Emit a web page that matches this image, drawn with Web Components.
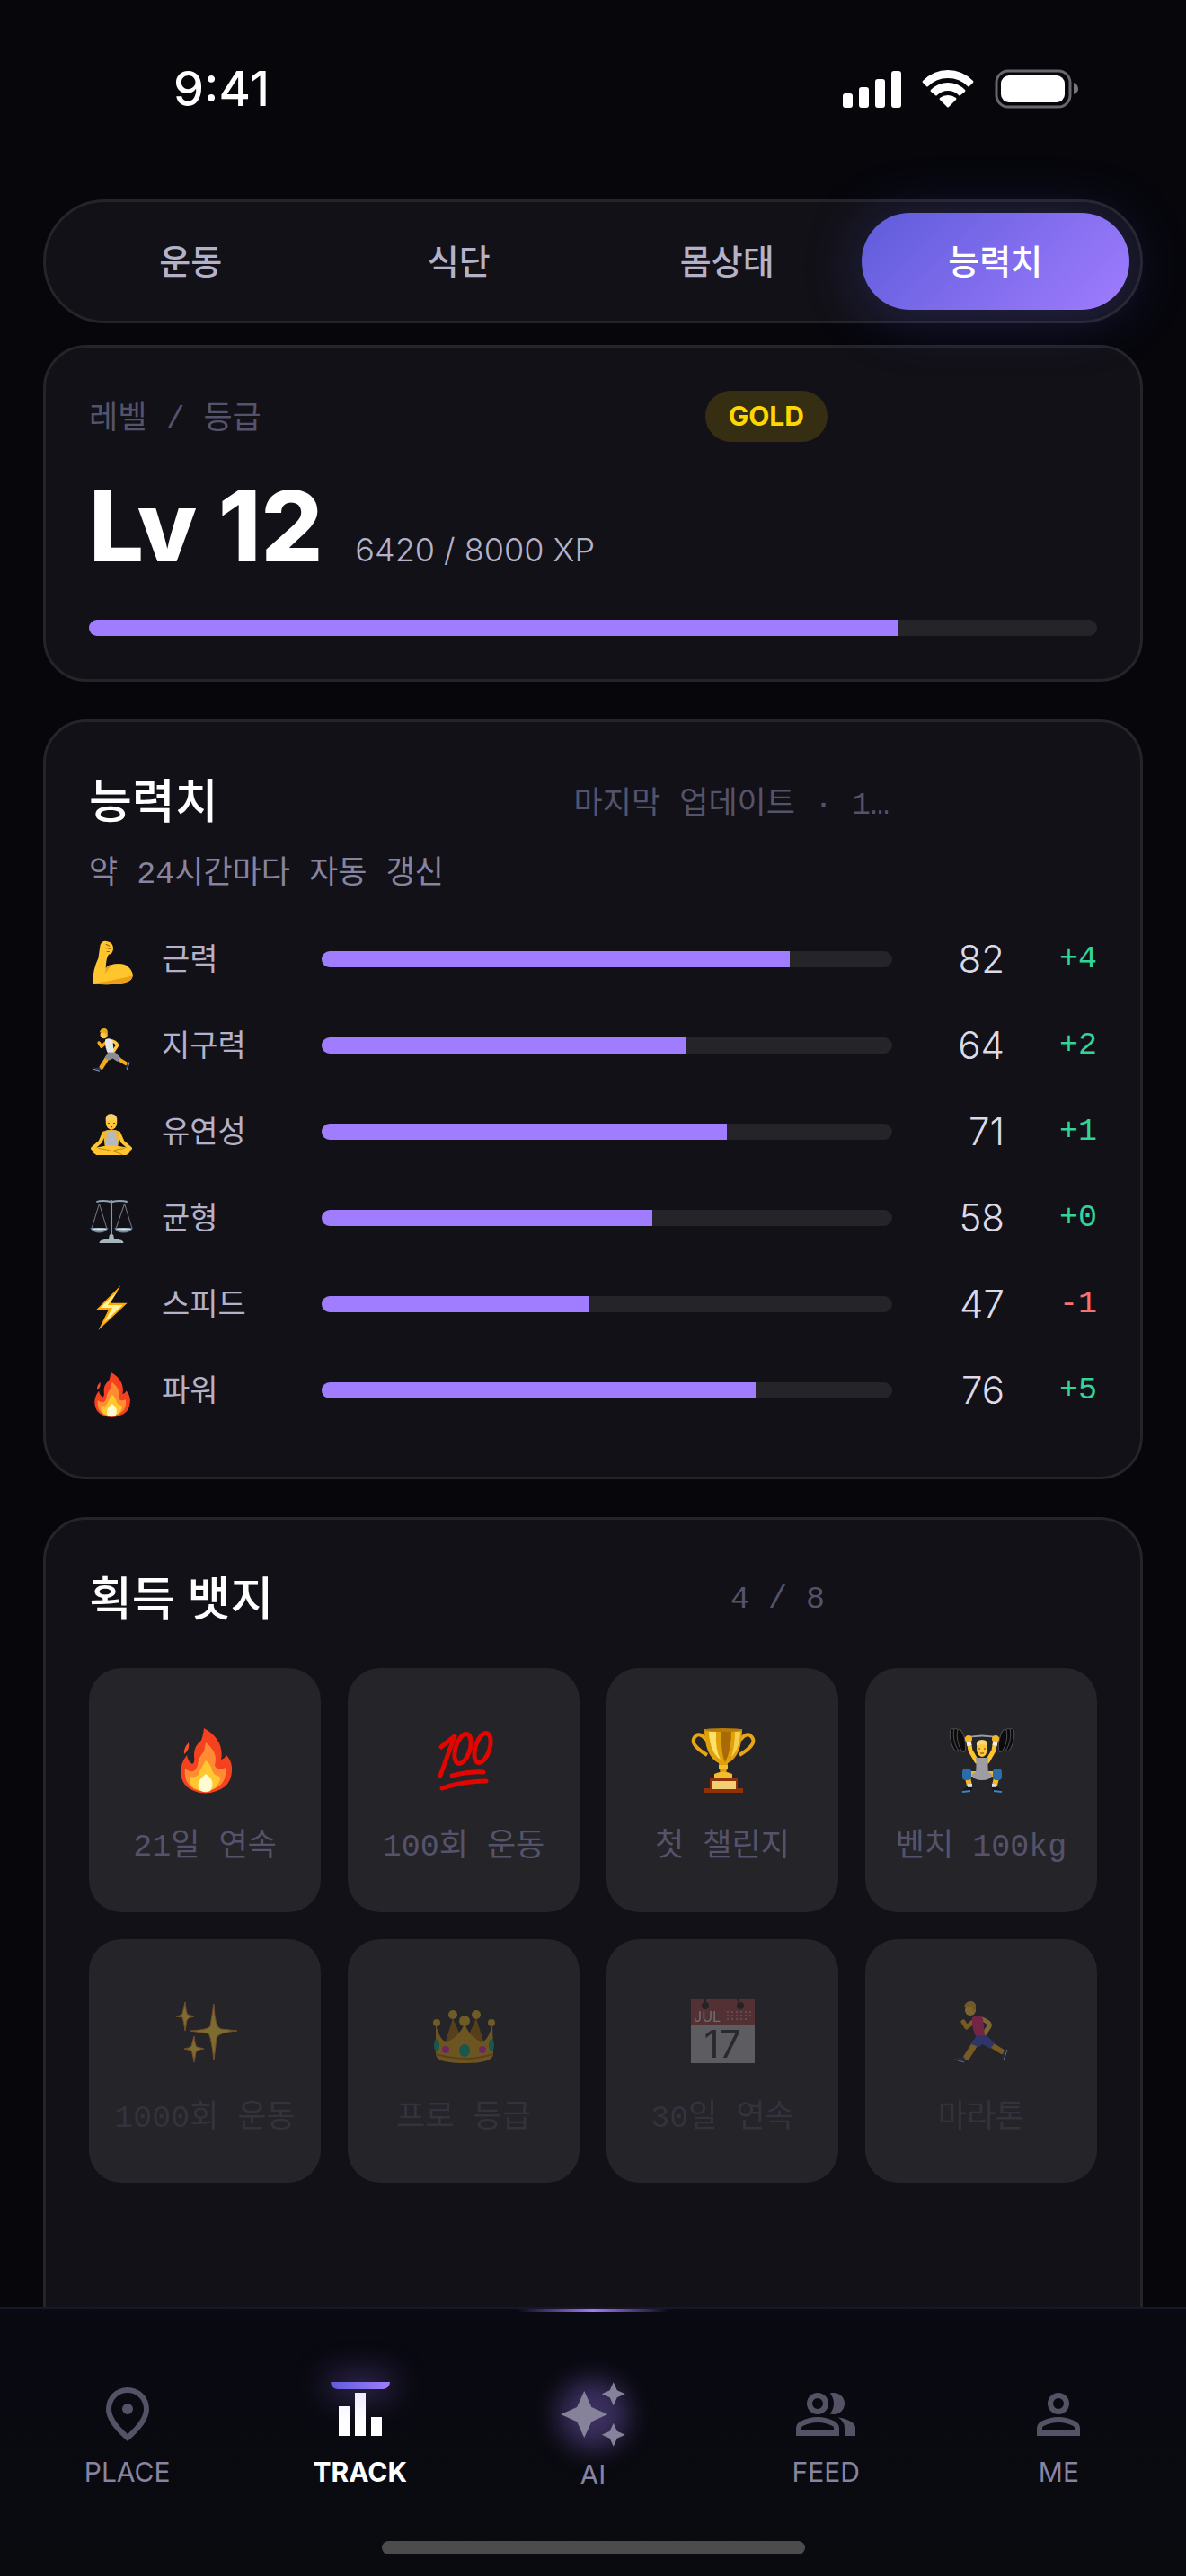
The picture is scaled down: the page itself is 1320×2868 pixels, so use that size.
<!DOCTYPE html>
<html lang="ko">
<head>
<meta charset="utf-8">
<meta name="viewport" content="width=device-width, initial-scale=1">
<title>Track</title>
<style>
  :root {
    --bg: #06060b;
    --surface: #121117;
    --line: #252429;
    --accent: #a07cff;
    --accent-2: #5e5cda;
    --text: #ffffff;
    --text-2: #b4b1c8;
    --text-3: #8784a0;
    --text-4: #55536b;
    --mono: "Liberation Mono", "Noto Sans CJK KR", monospace;
  }
  html, body {
    margin: 0;
    height: 100%;
    background: var(--bg);
    color: var(--text);
    font-family: Inter, "Noto Sans CJK KR", sans-serif;
  }
</style>
</head>
<body>
<track-app></track-app>

<script>
const runner = (shirt, shorts) => `
  <g fill="none" stroke-linecap="round" stroke-linejoin="round" stroke="#f2ab1c">
    <path d="M46 51 59 59" stroke-width="6"/>
    <path d="M30 49Q26 56 20 65" stroke-width="7"/>
    <path d="M29 24 20 32 16 26" stroke-width="5"/>
    <path d="M37 23Q47 27 45 31L39 40" stroke-width="5" stroke="#ffc83d"/>
  </g>
  <path d="M26 21Q33 17 38 22L40 42 31 44Q25 33 26 21Z" fill="${shirt}"/>
  <path d="M31 41 42 41 51 50 46 56 38 51 33 54 25 51Z" fill="${shorts}"/>
  <circle cx="24" cy="13" r="6" fill="#ffc83d"/>
  <path d="M17 9Q19 2 26 3 32 5 29 13L27 14 26 10Z" fill="#e9a820"/>
  <path d="M7 66 18 66 17 71ZM61 59 65 55 63 66 59 68Z" fill="#23396b"/>
  <path d="M7 68 17 71M65 57 61 69" stroke="#cdd6ea" stroke-width="1"/>`;

const flame = `
  <path d="M35 1C50 9 57 22 54 36Q58 35 60 31 67 39 66 49 65 66 49 71 36 76 24 71 10 66 9 50 9 40 16 31 17 38 22 41 25 40 24 32C24 22 27 21 29 17Q33 17 35 1Z" fill="#f4411f"/>
  <path d="M18 17Q19 23 16 27L13 30Q12 23 18 17Z" fill="#f4512c"/>
  <path d="M37 17C49 27 49 34 47 43Q51 49 59 45 61 63 46 69 35 74 24 69 12 62 14 46 25 54 28 42 29 33 35 27Z" fill="#ff8b32"/>
  <path d="M37 37C46 43 42 52 50 54Q57 56 48 67 38 75 24 68 17 62 20 55 29 57 30 49Z" fill="#ffc82e"/>
  <path d="M37 52Q49 60 42 71 36 74 30 70 25 61 37 52Z" fill="#fffbd0"/>`;

// each drawing is [viewBox size, markup]
const emojis = {
  muscle: [48, `
    <path d="M12 5Q14 0 19 1 26 2 26 9 25 15 21 15 18 20 18 30 22 25 32 25 44 25 47 37 47 43 39 45 21 49 4 46 4 31 10 19Z" fill="#ffc52e"/>
    <path d="M18 30Q20 26 25 26 20 31 17 36ZM4 46Q22 44 46 38 47 43 39 45 21 49 4 46Z" fill="#eba018"/>
    <path d="M18 4 22 6M17 8 23 9M19 12 22 12" stroke="#9c5d0c" stroke-width="1" fill="none"/>`],
  run: [72, runner("#e6e6ea", "#8b8c94")],
  marathon: [72, runner("#e8286f", "#3c50c8")],
  yoga: [48, `
    <path d="M16 22 12 31 4 38M32 22 36 31 44 38" fill="none" stroke="#ffc52e" stroke-width="4" stroke-linecap="round"/>
    <path d="M15 20Q24 16 33 20L31 36H17Z" fill="#f5b524"/>
    <path d="M19 18V24L17 38H31L29 24V18Q24 23 19 18Z" fill="#b9b9bd"/>
    <path d="M8 37Q24 33 40 37 48 41 40 45 24 45 8 45 0 41 8 37Z" fill="#ffc52e"/>
    <path d="M10 38Q26 40 36 45M38 38Q30 39 25 41" fill="none" stroke="#c98311" stroke-width="1"/>
    <ellipse cx="24" cy="10" rx="6" ry="8" fill="#ffc83d"/>
    <path d="M18 9Q17 1 24 1 31 2 30 9 24 6 18 9Z" fill="#f7d06a"/>
    <path d="M20 11H22M26 11H28M23 15H25" stroke="#7a4a0c"/>`],
  scales: [48, `
    <path d="M8 3Q14 1 24 3 34 1 41 3" fill="none" stroke="#8ea2b0" stroke-width="2"/>
    <path d="M24 1V44" stroke="#7e98aa" stroke-width="2"/>
    <path d="M11 5 3 31M11 5 19 31M38 5 29 31M38 5 46 31" stroke="#71767c" stroke-width="1" fill="none"/>
    <path d="M1 31H21Q17 36 11 36 5 36 1 31ZM27 31H47Q44 36 37 36 30 36 27 31Z" fill="#6f8799"/>
    <ellipse cx="11" cy="32" rx="8" ry="1" fill="#d3dfe6"/><ellipse cx="37" cy="32" rx="8" ry="1" fill="#d3dfe6"/>
    <path d="M22 38H26L27 43Q37 43 37 47H11Q11 43 21 43Z" fill="#a8b5be"/>`],
  bolt: [48, `
    <path d="M34 0 23 19 41 19 10 48 21 26 8 26Z" fill="#ffa800"/>
    <path d="M31 6 20 21 36 21 16 40 25 24 12 24Z" fill="#fff3a6"/>`],
  flame: [72, flame],
  hundred: [72, `
    <g fill="none" stroke="#e10600" stroke-width="5" stroke-linecap="round">
      <line x1="11" y1="22" x2="26" y2="10"/><line x1="26" y1="10" x2="10" y2="54"/>
      <ellipse cx="35" cy="24" rx="8" ry="17" transform="rotate(17 35 24)"/>
      <ellipse cx="57" cy="23" rx="8" ry="17" transform="rotate(17 57 23)"/>
      <path d="M23 54Q40 49 58 50M12 68Q36 60 61 60"/>
    </g>`],
  trophy: [72, `
    <path d="M18 14Q9 3 4 13 1 20 19 31M56 14Q65 3 70 13 73 20 55 31" fill="none" stroke="#e8a712" stroke-width="4"/>
    <path d="M16 2H58Q58 32 42 40L40 53H34L32 40Q16 32 16 2Z" fill="#e0a00c"/>
    <path d="M21 5H29Q28 26 34 36 22 28 21 5Z" fill="#ffe06a"/>
    <path d="M35 3H46Q46 26 39 39 34 28 35 3Z" fill="#a76a04"/>
    <path d="M50 5H56Q55 25 46 33 50 20 50 5Z" fill="#f8cf4c"/>
    <ellipse cx="37" cy="3" rx="21" ry="2" fill="#b87c08"/>
    <path d="M32 42H42V47H32ZM27 52Q37 47 47 52V57H27Z" fill="#f3bd2c"/>
    <path d="M22 56H53V68H59V73H15V68H22Z" fill="#8f3209"/>
    <rect x="24" y="60" width="27" height="9" fill="#f1cf72"/>`],
  lifter: [72, `
    <path d="M15 13Q37 6 59 13" fill="none" stroke="#9aa0a8" stroke-width="2"/>
    <g fill="#0b0b0c" stroke="#4d4e52" stroke-width="1">
      <ellipse cx="6" cy="14" rx="4" ry="13" transform="rotate(-12 6 14)"/>
      <ellipse cx="10" cy="14" rx="4" ry="13" transform="rotate(-12 10 14)"/>
      <ellipse cx="14" cy="15" rx="4" ry="13" transform="rotate(-12 14 15)"/>
      <ellipse cx="68" cy="14" rx="4" ry="13" transform="rotate(12 68 14)"/>
      <ellipse cx="64" cy="14" rx="4" ry="13" transform="rotate(12 64 14)"/>
      <ellipse cx="60" cy="15" rx="4" ry="13" transform="rotate(12 60 15)"/>
    </g>
    <path d="M22 14 24 26 31 38M52 14 50 26 43 38" fill="none" stroke="#ffc52e" stroke-width="5" stroke-linecap="round"/>
    <circle cx="22" cy="13" r="4" fill="#f5b524"/><circle cx="52" cy="13" r="4" fill="#f5b524"/>
    <path d="M20 19 25 18M49 18 54 19" stroke="#eeeef0" stroke-width="4"/>
    <path d="M30 52 20 52 23 65M44 52 54 52 51 65" fill="none" stroke="#f5b524" stroke-width="6"/>
    <path d="M30 34H44Q43 44 44 50L49 53Q46 59 37 59 28 59 25 53L30 50Q31 44 30 34Z" fill="#9d9da3"/>
    <rect x="15" y="46" width="10" height="13" rx="4" fill="#2a6dac"/><rect x="49" y="46" width="10" height="13" rx="4" fill="#2a6dac"/>
    <path d="M21 63H26V67H21ZM48 63H53V67H48Z" fill="#dcdce0"/>
    <path d="M15 71Q17 66 27 67L24 72ZM59 71Q57 66 47 67L50 72Z" fill="#15171b"/>
    <path d="M15 72 24 71M59 72 50 71" stroke="#3b86c4" stroke-width="2"/>
    <ellipse cx="37" cy="24" rx="6" ry="9" fill="#ffc83d"/>
    <path d="M31 21Q30 14 37 14 44 14 43 21 37 17 31 21Z" fill="#f7d67c"/>
    <path d="M33 24H35M39 24H41M35 29H39" stroke="#6b3f10"/>`],
  sparkles: [72, `
    <g fill="#ffd83a" stroke="#e78b2a" stroke-width="1">
      <path d="M46 6Q47 33 54 34L72 36Q50 38 49 44L46 69Q43 42 40 39L19 36Q40 35 42 31Z"/>
      <path d="M14 4Q15 16 17 18L24 20Q17 21 16 24L14 36Q12 23 11 21L4 20Q10 19 11 17Z"/>
      <path d="M24 42Q25 52 27 54L35 56Q27 57 26 60L24 71Q22 60 21 58L13 56Q20 55 21 53Z"/>
    </g>`],
  crown: [72, `
    <path d="M14 54 24 22 37 52 50 22 60 54Z" fill="#a06a09"/>
    <path d="M5 29Q11 52 20 47 31 42 37 28 42 42 53 47 62 52 68 29L69 62Q69 72 37 72 5 72 5 62Z" fill="#d99f18"/>
    <path d="M5 62Q37 72 69 62" fill="none" stroke="#a87008" stroke-width="2"/>
    <g fill="#dfae24"><circle cx="6" cy="27" r="4"/><circle cx="24" cy="18" r="5"/><circle cx="37" cy="25" r="6"/><circle cx="50" cy="18" r="5"/><circle cx="67" cy="27" r="4"/></g>
    <g fill="#07a37c"><ellipse cx="6" cy="52" rx="3" ry="7"/><ellipse cx="37" cy="58" rx="6" ry="7"/><ellipse cx="67" cy="52" rx="3" ry="7"/></g>
    <ellipse cx="16" cy="57" rx="4" ry="4" fill="#d62bb4"/><ellipse cx="57" cy="57" rx="4" ry="4" fill="#d62bb4"/>`],
  calendar: [72, `
    <rect x="1" y="1" width="71" height="71" fill="#b2b1b6"/>
    <rect x="1" y="1" width="71" height="28" fill="#984446"/>
    <path d="M17 0V6M52 0 56 6" stroke="#222" stroke-width="2"/>
    <circle cx="17" cy="8" r="4" fill="#222"/><circle cx="56" cy="8" r="4" fill="#222"/>
    <path d="M41 15H70M41 19H70M41 23H66" stroke="#c98587" stroke-width="2" stroke-dasharray="2 3"/>
    <text x="4" y="26" font-size="16" font-family="Inter, sans-serif" fill="#ddd">JUL</text>
    <text x="36" y="66" font-size="42" text-anchor="middle" font-family="Inter, sans-serif" fill="#333">17</text>`],
};

const navIcons = {
  place: `<svg viewBox="0 -960 960 960"><path d="M480-480q33 0 56.500-23.500T560-560q0-33-23.500-56.500T480-640q-33 0-56.500 23.500T400-560q0 33 23.500 56.500T480-480Zm0 294q122-112 181-203.500T720-552q0-109-69.500-178.500T480-800q-101 0-170.500 69.500T240-552q0 71 59 162.500T480-186Zm0 106Q319-217 239.500-334.500T160-552q0-150 96.500-239T480-880q127 0 223.500 89T800-552q0 100-79.500 217.500T480-80Z"/></svg>`,
  track: `<svg viewBox="0 0 24 24"><path d="M4 9h4v11H4zM10 4h4v16h-4zM16 13h4v7h-4z"/></svg>`,
  ai: `<svg viewBox="0 0 24 24"><path d="M19 9l1.250-2.750L23 5l-2.750-1.250L19 1l-1.250 2.750L15 5l2.750 1.250L19 9zm-7.500.5L9 4 6.500 9.500 1 12l5.500 2.500L9 20l2.500-5.500L17 12l-5.500-2.500zM19 15l-1.250 2.750L15 19l2.750 1.250L19 23l1.250-2.750L23 19l-2.750-1.250L19 15z"/></svg>`,
  feed: `<svg viewBox="0 -960 960 960"><path d="M40-160v-112q0-34 17.500-62.500T104-378q62-31 126-46.500T360-440q66 0 130 15.500T616-378q29 15 46.500 43.500T680-272v112H40Zm720 0v-120q0-44-24.500-84.500T666-434q51 6 96 20.500t84 35.500q36 20 55 44.500t19 53.500v120H760ZM360-480q-66 0-113-47t-47-113q0-66 47-113t113-47q66 0 113 47t47 113q0 66-47 113t-113 47Zm400-160q0 66-47 113t-113 47q-11 0-28-2.500t-28-5.500q27-32 41.500-71t14.500-81q0-42-14.500-81T544-792q14-5 28-6.500t28-1.500q66 0 113 47t47 113ZM120-240h480v-32q0-11-5.500-20T580-306q-54-27-109-40.500T360-360q-56 0-111 13.500T140-306q-9 5-14.500 14t-5.500 20v32Zm240-320q33 0 56.500-23.500T440-640q0-33-23.500-56.500T360-720q-33 0-56.500 23.500T280-640q0 33 23.500 56.500T360-560Z"/></svg>`,
  me: `<svg viewBox="0 -960 960 960"><path d="M480-480q-66 0-113-47t-47-113q0-66 47-113t113-47q66 0 113 47t47 113q0 66-47 113t-113 47ZM160-160v-112q0-34 17.500-62.500T224-378q62-31 126-46.500T480-440q66 0 130 15.500T736-378q29 15 46.500 43.500T800-272v112H160Zm80-80h480v-32q0-11-5.500-20T700-306q-54-27-109-40.500T480-360q-56 0-111 13.500T260-306q-9 5-14.500 14t-5.500 20v32Zm240-320q33 0 56.500-23.500T560-640q0-33-23.500-56.500T480-720q-33 0-56.500 23.500T400-640q0 33 23.500 56.500T480-560Z"/></svg>`,
};

class BaseElement extends HTMLElement {
  constructor() {
    super();
    this.attachShadow({ mode: "open" });
  }
  connectedCallback() {
    this.shadowRoot.innerHTML = this.render();
  }
}

class EmojiIcon extends BaseElement {
  render() {
    const [size, art] = emojis[this.getAttribute("name")];
    return `
      <style>
        :host { display: block; }
        svg { display: block; width: 100%; height: 100%; overflow: visible; }
      </style>
      <svg viewBox="0 0 ${size} ${size}" aria-hidden="true">${art}</svg>`;
  }
}

class StatusBar extends BaseElement {
  render() {
    return `
      <style>
        :host {
          display: flex;
          align-items: center;
          justify-content: space-between;
          box-sizing: border-box;
          height: 150px;
          padding: 48px 120px 0 193px;
        }
        time { font-size: 54px; line-height: 60px; font-weight: 500; }
        .icons { display: flex; align-items: center; gap: 23px; }
        svg { display: block; }
      </style>
      <time>9:41</time>
      <div class="icons">
        <svg width="65" height="42" viewBox="0 0 65 42" fill="#fff" aria-hidden="true">
          <rect x="0" y="26" width="11" height="16" rx="3"/>
          <rect x="18" y="19" width="11" height="23" rx="3"/>
          <rect x="36" y="10" width="11" height="32" rx="3"/>
          <rect x="54" y="1" width="11" height="41" rx="3"/>
        </svg>
        <svg width="58" height="42" viewBox="0 0 58 42" fill="#fff" aria-hidden="true">
          <path d="M29 9Q42 9 51 18 52 19 53 18L57 14Q58 13 57 12 45 0 29 0 13 0 1 12 0 13 1 14L5 18Q6 19 7 18 16 9 29 9Z"/>
          <path d="M29 23Q36 23 41 28 42 29 43 28L48 24Q49 23 48 22 40 14 29 14 18 14 10 22 9 23 10 24L15 28Q16 29 17 28 22 23 29 23Z"/>
          <path d="M38 33Q39 32 38 31 34 28 29 28 24 28 20 31 19 32 20 33L28 41Q29 42 30 41Z"/>
        </svg>
        <svg width="93" height="44" viewBox="0 0 93 44" aria-hidden="true">
          <rect x="2" y="2" width="82" height="40" rx="13" fill="none" stroke="#68676d" stroke-width="3"/>
          <rect x="7" y="7" width="71" height="30" rx="9" fill="#fff"/>
          <path d="M88 15Q93 17 93 22 93 26 88 28Z" fill="#77777a"/>
        </svg>
      </div>`;
  }
}

class SegmentTabs extends BaseElement {
  render() {
    const labels = this.getAttribute("labels").split(",");
    const current = Number(this.getAttribute("selected"));
    return `
      <style>
        :host { display: block; position: relative; z-index: 1; }
        div {
          display: grid;
          grid-template-columns: repeat(4, 1fr);
          padding: 12px;
          border: 3px solid var(--line);
          border-radius: 69px;
          background: var(--surface);
        }
        button {
          height: 108px;
          padding: 0;
          border: 0;
          border-radius: 54px;
          background: none;
          color: var(--text-2);
          font: 500 38px/48px Inter, "Noto Sans CJK KR", sans-serif;
          cursor: pointer;
        }
        button[aria-selected="true"] {
          background: linear-gradient(135deg, var(--accent-2), var(--accent));
          box-shadow: 0 6px 66px rgba(94, 92, 230, 0.28);
          color: var(--text);
        }
      </style>
      <div role="tablist">
        ${labels
          .map((label, i) => `<button role="tab" aria-selected="${i === current}">${label}</button>`)
          .join("")}
      </div>`;
  }
}

class InfoCard extends BaseElement {
  render() {
    return `
      <style>
        :host {
          display: block;
          box-sizing: border-box;
          flex: none;
          padding: 48px;
          border: 3px solid var(--line);
          border-radius: 48px;
          background: var(--surface);
        }
      </style>
      <slot></slot>`;
  }
}

class CardHead extends BaseElement {
  render() {
    return `
      <style>
        :host {
          display: flex;
          align-items: center;
          justify-content: space-between;
          min-height: 81px;
          padding-right: 303px;
          color: var(--text-4);
          font: 400 35px/48px var(--mono);
        }
        :host([compact]) { min-height: 57px; padding-right: 300px; }
        :host([wide]) { padding-right: 231px; }
        ::slotted(h2) {
          margin: 0;
          color: var(--text);
          font: 500 52px/72px Inter, "Noto Sans CJK KR", sans-serif;
        }
        :host([compact]) ::slotted(span), :host([wide]) ::slotted(span) { padding-top: 8px; }
      </style>
      <slot></slot>
      <slot name="trail"></slot>`;
  }
}

class TierChip extends BaseElement {
  render() {
    return `
      <style>
        :host {
          display: block;
          padding: 0 26px;
          border-radius: 29px;
          background: rgba(255, 215, 0, 0.15);
          color: #ffd700;
          font: 700 30px/57px Inter, sans-serif;
        }
      </style>
      <slot></slot>`;
  }
}

class MeterBar extends BaseElement {
  render() {
    return `
      <style>
        :host {
          display: block;
          height: 18px;
          border-radius: 9px;
          background: var(--line);
          overflow: hidden;
        }
        div { height: 100%; background: var(--accent); }
      </style>
      <div style="width: ${this.getAttribute("value")}%"></div>`;
  }
}

class LevelInfo extends BaseElement {
  render() {
    return `
      <style>
        :host {
          display: flex;
          align-items: baseline;
          gap: 36px;
          margin: 24px 0 34px;
        }
        strong { font-size: 108px; line-height: 140px; font-weight: 800; }
        span { color: var(--text-2); font-size: 36px; line-height: 48px; font-weight: 300; }
      </style>
      <strong>Lv ${this.getAttribute("level")}</strong>
      <span>${this.getAttribute("xp")} XP</span>`;
  }
}

class StatRow extends BaseElement {
  render() {
    const delta = this.getAttribute("delta");
    return `
      <style>
        :host {
          display: grid;
          grid-template-columns: 81px 178px 1fr 125px 103px;
          align-items: center;
          height: 96px;
        }
        emoji-icon { width: 50px; height: 50px; padding-top: 8px; }
        .name { color: var(--text-2); font-size: 34px; line-height: 48px; }
        .score { color: #dcdae6; font-size: 42px; line-height: 48px; font-weight: 300; text-align: right; }
        .delta { color: #34d399; font: 400 35px/48px var(--mono); text-align: right; }
        .down { color: #f87171; }
      </style>
      <emoji-icon name="${this.getAttribute("icon")}"></emoji-icon>
      <span class="name"><slot></slot></span>
      <meter-bar value="${this.getAttribute("score")}"></meter-bar>
      <span class="score">${this.getAttribute("score")}</span>
      <span class="delta ${delta.startsWith("-") ? "down" : ""}">${delta}</span>`;
  }
}

class BadgeTile extends BaseElement {
  render() {
    return `
      <style>
        :host {
          display: flex;
          flex-direction: column;
          align-items: center;
          gap: 38px;
          box-sizing: border-box;
          aspect-ratio: 19 / 20;
          padding-top: 66px;
          border-radius: 36px;
          background: var(--line);
          color: var(--text-4);
          font: 400 35px/48px var(--mono);
          white-space: nowrap;
        }
        emoji-icon { width: 72px; height: 72px; }
        :host([locked]) emoji-icon { opacity: 0.4; }
        :host([locked]) span { opacity: 0.3; }
      </style>
      <emoji-icon name="${this.getAttribute("icon")}"></emoji-icon>
      <span><slot></slot></span>`;
  }
}

class NavItem extends BaseElement {
  render() {
    return `
      <style>
        :host { display: block; }
        a {
          display: flex;
          flex-direction: column;
          align-items: center;
          gap: 10px;
          color: var(--text-3);
          font-size: 30px;
          line-height: 36px;
          font-weight: 400;
          text-decoration: none;
        }
        .icon { position: relative; width: 72px; height: 72px; }
        svg { display: block; position: relative; width: 100%; height: 100%; fill: #545264; }
        :host([active]) a { color: var(--text); font-weight: 700; }
        :host([active]) svg { fill: #fff; }
        :host([active]) .icon::after {
          content: "";
          position: absolute;
          top: 0;
          left: 3px;
          right: 3px;
          height: 8px;
          border-radius: 0 0 9px 9px;
          background: linear-gradient(90deg, var(--accent-2), var(--accent));
          box-shadow: 0 0 36px 3px rgba(160, 124, 255, 0.6);
        }
        :host([glow]) .icon { width: 78px; height: 78px; }
        :host([glow]) svg { fill: #858299; }
        :host([glow]) .icon::before {
          content: "";
          position: absolute;
          inset: 0;
          border-radius: 50%;
          background: rgba(160, 124, 255, 0.33);
          filter: blur(14px);
        }
      </style>
      <a href="#${this.getAttribute("icon")}">
        <div class="icon">${navIcons[this.getAttribute("icon")]}</div>
        <slot></slot>
      </a>`;
  }
}

class NavBar extends BaseElement {
  render() {
    return `
      <style>
        :host {
          display: block;
          position: relative;
          border-top: 3px solid #19152a;
          background: linear-gradient(#090912, #0a0b0f);
        }
        :host::before {
          content: "";
          position: absolute;
          top: 0;
          left: 50%;
          width: 168px;
          height: 3px;
          margin-left: -84px;
          background: linear-gradient(90deg, transparent, var(--accent), transparent);
        }
        nav {
          display: grid;
          grid-template-columns: repeat(5, 1fr);
          align-items: center;
          padding: 78px 12px 56px;
        }
        .home {
          width: 471px;
          height: 15px;
          margin: 0 auto 24px;
          border-radius: 8px;
          background: #4c4c4c;
        }
      </style>
      <nav><slot></slot></nav>
      <div class="home"></div>`;
  }
}

class TrackApp extends BaseElement {
  render() {
    return `
      <style>
        :host { display: flex; flex-direction: column; height: 100vh; }
        main {
          display: flex;
          flex-direction: column;
          flex: 1;
          min-height: 0;
          gap: 42px;
          box-sizing: border-box;
          padding: 72px 48px 0;
          overflow: hidden;
        }
        .top { display: grid; gap: 24px; }
        .note { margin: 16px 0 20px; color: var(--text-3); font: 400 35px/51px var(--mono); }
        .badges {
          display: grid;
          grid-template-columns: repeat(4, 1fr);
          gap: 30px;
          margin: 36px 0 240px;
        }
      </style>
      <status-bar></status-bar>
      <main>
        <div class="top">
          <segment-tabs labels="운동,식단,몸상태,능력치" selected="3"></segment-tabs>
          <info-card>
            <card-head compact><span>레벨 / 등급</span><tier-chip slot="trail">GOLD</tier-chip></card-head>
            <level-info level="12" xp="6420 / 8000"></level-info>
            <meter-bar value="80.25"></meter-bar>
          </info-card>
        </div>
        <info-card>
          <card-head wide><h2>능력치</h2><span slot="trail">마지막 업데이트 · 1…</span></card-head>
          <p class="note">약 24시간마다 자동 갱신</p>
          <stat-row icon="muscle" score="82" delta="+4">근력</stat-row>
          <stat-row icon="run" score="64" delta="+2">지구력</stat-row>
          <stat-row icon="yoga" score="71" delta="+1">유연성</stat-row>
          <stat-row icon="scales" score="58" delta="+0">균형</stat-row>
          <stat-row icon="bolt" score="47" delta="-1">스피드</stat-row>
          <stat-row icon="flame" score="76" delta="+5">파워</stat-row>
        </info-card>
        <info-card>
          <card-head><h2>획득 뱃지</h2><span slot="trail">4 / 8</span></card-head>
          <div class="badges">
            <badge-tile icon="flame">21일 연속</badge-tile>
            <badge-tile icon="hundred">100회 운동</badge-tile>
            <badge-tile icon="trophy">첫 챌린지</badge-tile>
            <badge-tile icon="lifter">벤치 100kg</badge-tile>
            <badge-tile icon="sparkles" locked>1000회 운동</badge-tile>
            <badge-tile icon="crown" locked>프로 등급</badge-tile>
            <badge-tile icon="calendar" locked>30일 연속</badge-tile>
            <badge-tile icon="marathon" locked>마라톤</badge-tile>
          </div>
        </info-card>
      </main>
      <nav-bar>
        <nav-item icon="place">PLACE</nav-item>
        <nav-item icon="track" active>TRACK</nav-item>
        <nav-item icon="ai" glow>AI</nav-item>
        <nav-item icon="feed">FEED</nav-item>
        <nav-item icon="me">ME</nav-item>
      </nav-bar>`;
  }
}

customElements.define("emoji-icon", EmojiIcon);
customElements.define("status-bar", StatusBar);
customElements.define("segment-tabs", SegmentTabs);
customElements.define("info-card", InfoCard);
customElements.define("card-head", CardHead);
customElements.define("tier-chip", TierChip);
customElements.define("meter-bar", MeterBar);
customElements.define("level-info", LevelInfo);
customElements.define("stat-row", StatRow);
customElements.define("badge-tile", BadgeTile);
customElements.define("nav-item", NavItem);
customElements.define("nav-bar", NavBar);
customElements.define("track-app", TrackApp);
</script>
</body>
</html>
